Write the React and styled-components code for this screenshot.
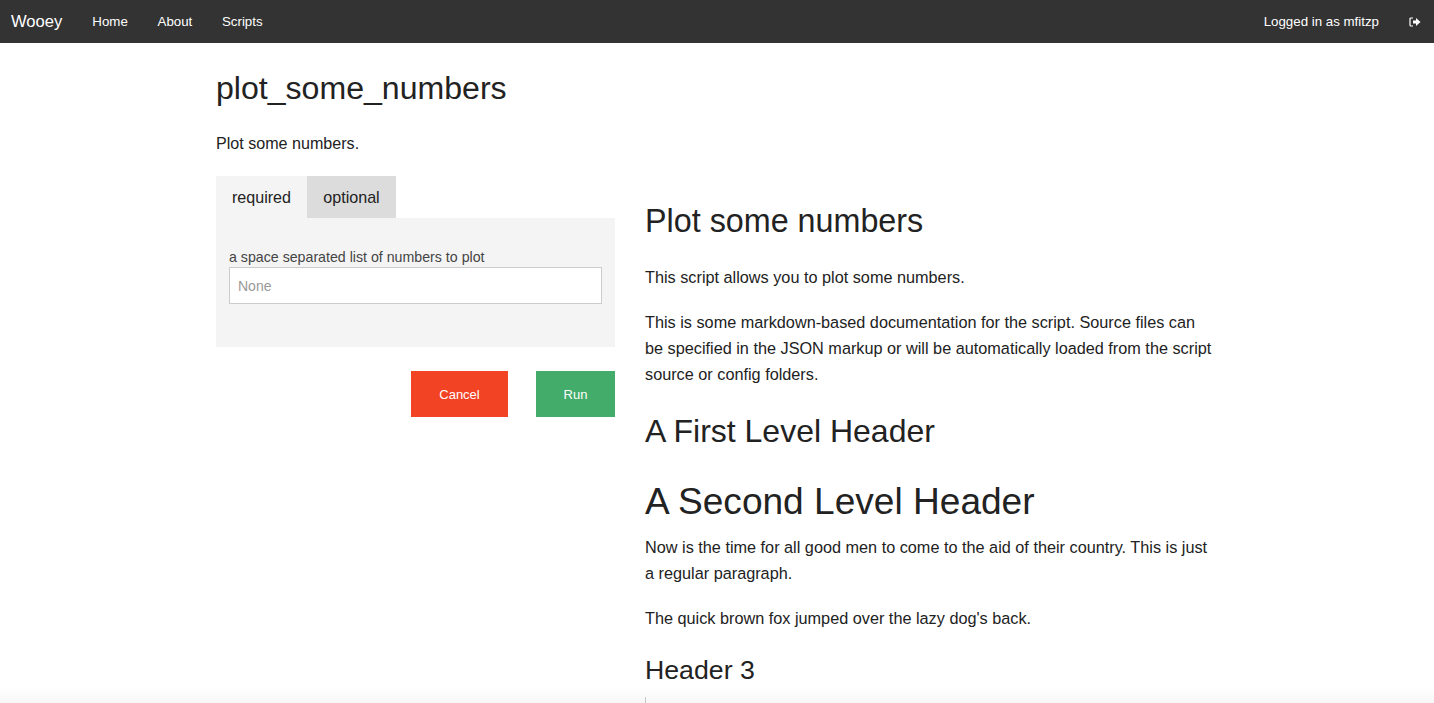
import styled, { createGlobalStyle } from "styled-components";

const GlobalStyle = createGlobalStyle`
  html, body {
    margin: 0;
    height: 703px;
    overflow: hidden;
    background: #fff;
    font-family: "Liberation Sans", Arial, sans-serif;
    font-size: 16px;
    color: #222;
  }
  * { box-sizing: border-box; }
`;

const Navbar = styled.nav`
  display: flex;
  align-items: center;
  height: 43px;
  padding: 0 13px 0 11px;
  background: #333;
  color: #fff;
  font-size: 13.3px;
`;

const Brand = styled.a`
  font-size: 16.6px;
  margin-right: 30px;
`;

const NavLink = styled.a`
  margin-right: 29.7px;
`;

const NavRight = styled.div`
  display: flex;
  align-items: center;
  margin-left: auto;
  gap: 30px;
`;

const Container = styled.div`
  width: 1002px;
  margin: 0 auto;
`;

const Title = styled.h1`
  font-size: 32.1px;
  font-weight: 400;
  line-height: 38px;
  margin: 26px 0 0;
  color: #222;
`;

const Lead = styled.p`
  font-size: 16.1px;
  line-height: 24px;
  margin: 24px 0 0;
`;

const Columns = styled.div`
  display: flex;
  gap: 30px;
`;

const Left = styled.div`
  flex: 0 0 399px;
  padding-top: 21px;
`;

const Right = styled.div`
  flex: 0 0 570px;
  margin-top: 27px;
`;

const Tabs = styled.div`
  display: flex;
`;

const Tab = styled.div`
  height: 42px;
  width: ${(p) => p.$width}px;
  display: flex;
  align-items: center;
  justify-content: center;
  font-size: 16.1px;
  background: ${(p) => (p.$active ? "#f4f4f4" : "#dcdcdc")};
`;

const Panel = styled.div`
  height: 129px;
  padding: 30px 13px 0;
  background: #f4f4f4;
`;

const Label = styled.label`
  display: block;
  font-size: 14.2px;
  line-height: 19px;
  color: #444;
`;

const Input = styled.input`
  display: block;
  width: 100%;
  height: 37px;
  padding: 0 8px;
  border: 1px solid #ccc;
  background: #fff;
  font-family: inherit;
  font-size: 14px;
  outline: none;
  &::placeholder { color: #999; opacity: 1; }
`;

const Actions = styled.div`
  display: flex;
  justify-content: flex-end;
  gap: 28px;
  margin-top: 24px;
`;

const Button = styled.button`
  height: 46px;
  width: ${(p) => p.$width}px;
  border: 0;
  background: ${(p) => p.$bg};
  color: #fff;
  font-family: inherit;
  font-size: 13px;
`;

const Heading = styled.h2`
  font-weight: 400;
  color: #222;
  font-size: ${(p) => p.$size}px;
  line-height: ${(p) => p.$line}px;
  margin: ${(p) => p.$top}px 0 0;
`;

const Para = styled.p`
  font-size: 16.25px;
  line-height: 26px;
  margin: ${(p) => p.$top ?? 19}px 0 0;
`;

const Quote = styled.blockquote`
  margin: 11px 0 0;
  padding-left: 20px;
  height: 6px;
  border-left: 1px solid #ccc;
`;

const BottomFade = styled.div`
  position: fixed;
  left: 0;
  right: 0;
  bottom: 0;
  height: 16px;
  background: linear-gradient(to bottom, rgba(0, 0, 0, 0), rgba(0, 0, 0, 0.03));
  pointer-events: none;
`;

const SignOutIcon = () => (
  <svg width="12" height="10" viewBox="0 0 12 10" fill="#fff" aria-hidden="true">
    <path d="M4 1H2a1 1 0 0 0-1 1v6a1 1 0 0 0 1 1h2" fill="none" stroke="#fff" strokeWidth="1.2" />
    <path d="M4 3.5h3V1l4.5 4L7 9V6.5H4z" />
  </svg>
);

const App = () => (
  <>
    <GlobalStyle />
    <Navbar>
      <Brand>Wooey</Brand>
      <NavLink>Home</NavLink>
      <NavLink>About</NavLink>
      <NavLink>Scripts</NavLink>
      <NavRight>
        <span>Logged in as mfitzp</span>
        <SignOutIcon />
      </NavRight>
    </Navbar>
    <Container>
      <Title>plot_some_numbers</Title>
      <Lead>Plot some numbers.</Lead>
      <Columns>
        <Left>
          <Tabs>
            <Tab $active $width={91}>required</Tab>
            <Tab $width={89}>optional</Tab>
          </Tabs>
          <Panel>
            <Label>a space separated list of numbers to plot</Label>
            <Input placeholder="None" />
          </Panel>
          <Actions>
            <Button $bg="#f24324" $width={97}>Cancel</Button>
            <Button $bg="#43ac6a" $width={79}>Run</Button>
          </Actions>
        </Left>
        <Right>
          <Heading $size={32.3} $line={38} $top={20}>Plot some numbers</Heading>
          <Para $top={24}>This script allows you to plot some numbers.</Para>
          <Para>This is some markdown-based documentation for the script. Source files can be specified in the JSON markup or will be automatically loaded from the script source or config folders.</Para>
          <Heading $size={32} $line={38} $top={25}>A First Level Header</Heading>
          <Heading $size={37.1} $line={44} $top={29}>A Second Level Header</Heading>
          <Para $top={11}>Now is the time for all good men to come to the aid of their country. This is just a regular paragraph.</Para>
          <Para>The quick brown fox jumped over the lazy dog's back.</Para>
          <Heading $size={26.7} $line={32} $top={23}>Header 3</Heading>
          <Quote />
        </Right>
      </Columns>
    </Container>
    <BottomFade />
  </>
);

export default App;
